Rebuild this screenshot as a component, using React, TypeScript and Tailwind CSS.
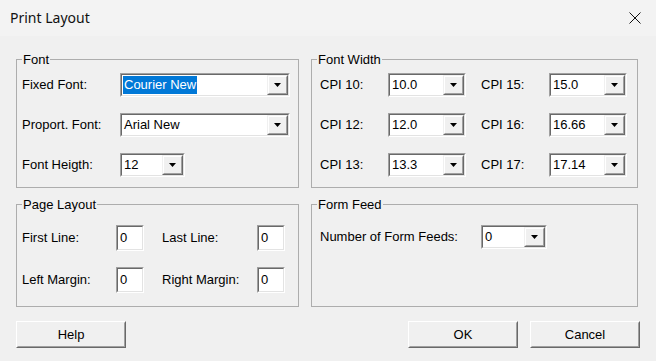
import React from "react";

const FONT = "font-['Liberation_Sans',Arial,sans-serif]";

function Arrow() {
  return (
    <svg width="7" height="4" viewBox="0 0 7 4">
      <path d="M0 0h7L3.5 4z" fill="#000" />
    </svg>
  );
}

function Combo({ value, width, selected = false }: { value: string; width: string; selected?: boolean }) {
  return (
    <div className={`${width} h-[24px] flex border border-t-[#a0a0a0] border-l-[#a0a0a0] border-b-white border-r-white`}>
      <div className="flex-1 flex border border-t-[#696969] border-l-[#696969] border-b-[#e3e3e3] border-r-[#e3e3e3] bg-white">
        <div className="flex-1 flex items-center pl-[1px] overflow-hidden">
          {selected ? (
            <span className="bg-[#0078d7] text-white leading-[18px] px-[1px]">{value}</span>
          ) : (
            <span className="px-[1px]">{value}</span>
          )}
        </div>
        <div className="w-[21px] flex border border-t-[#f0f0f0] border-l-[#f0f0f0] border-b-[#696969] border-r-[#696969]">
          <div className="flex-1 flex items-center justify-center bg-[#f0f0f0] border border-t-white border-l-white border-b-[#a0a0a0] border-r-[#a0a0a0]">
            <Arrow />
          </div>
        </div>
      </div>
    </div>
  );
}

function Field({ value }: { value: string }) {
  return (
    <div className="w-[28px] h-[26px] flex border border-t-[#a0a0a0] border-l-[#a0a0a0] border-b-white border-r-white">
      <div className="flex-1 flex items-center border border-t-[#696969] border-l-[#696969] border-b-[#e3e3e3] border-r-[#e3e3e3] bg-white pl-[2px]">
        {value}
      </div>
    </div>
  );
}

function Group({ title, className, children }: { title: string; className: string; children: React.ReactNode }) {
  return (
    <div className={`relative border border-[#adadad] ${className}`}>
      <span className="absolute -top-[8px] left-[5px] bg-[#f0f0f0] px-[1px] leading-[15px]">{title}</span>
      {children}
    </div>
  );
}

function Button({ label }: { label: string }) {
  return (
    <button className="w-[110px] h-[27px] flex border border-t-white border-l-white border-b-[#696969] border-r-[#696969]">
      <div className="flex-1 flex items-center justify-center bg-[#f0f0f0] border border-t-[#f0f0f0] border-l-[#f0f0f0] border-b-[#a0a0a0] border-r-[#a0a0a0]">
        {label}
      </div>
    </button>
  );
}

const CPI = [
  ["CPI 10:", "10.0", "CPI 15:", "15.0"],
  ["CPI 12:", "12.0", "CPI 16:", "16.66"],
  ["CPI 13:", "13.3", "CPI 17:", "17.14"],
];

const MARGINS = [
  ["First Line:", "Last Line:"],
  ["Left Margin:", "Right Margin:"],
];

export default function App() {
  return (
    <div className={`w-[656px] h-[361px] bg-[#f0f0f0] text-black text-[13px] ${FONT} overflow-hidden whitespace-nowrap`}>
      {/* Title bar */}
      <div className="h-[36px] flex items-center justify-between bg-[#f3f3f3] pl-[10px] pr-[15px]">
        <span className="font-['Noto_Sans',sans-serif] text-[14px] text-[#111] -mt-[1px]">Print Layout</span>
        <svg width="12" height="12" viewBox="0 0 12 12">
          <path d="M0.5 0.5L11.5 11.5M11.5 0.5L0.5 11.5" stroke="#111" strokeWidth="1" />
        </svg>
      </div>

      <div className="pl-[16px] pt-[23px]">
        <div className="grid grid-cols-[283px_327px] grid-rows-[129px_103px] gap-x-[12px] gap-y-[16px]">
          <Group title="Font" className="pt-[13px] pl-[5px]">
            <div className="flex flex-col gap-[16px]">
              <div className="flex items-center">
                <span className="w-[98px]">Fixed Font:</span>
                <Combo value="Courier New" width="w-[170px]" selected />
              </div>
              <div className="flex items-center">
                <span className="w-[98px]">Proport. Font:</span>
                <Combo value="Arial New" width="w-[170px]" />
              </div>
              <div className="flex items-center">
                <span className="w-[98px]">Font Heigth:</span>
                <Combo value="12" width="w-[65px]" />
              </div>
            </div>
          </Group>

          <Group title="Font Width" className="pt-[13px] pl-[8px]">
            <div className="flex flex-col gap-[16px]">
              {CPI.map(([l1, v1, l2, v2]) => (
                <div key={l1} className="flex items-center">
                  <span className="w-[68px]">{l1}</span>
                  <Combo value={v1} width="w-[78px]" />
                  <span className="w-[68px] ml-[15px]">{l2}</span>
                  <Combo value={v2} width="w-[78px]" />
                </div>
              ))}
            </div>
          </Group>

          <Group title="Page Layout" className="pt-[20px] pl-[5px]">
            <div className="flex flex-col gap-[16px]">
              {MARGINS.map(([l1, l2]) => (
                <div key={l1} className="flex items-center">
                  <span className="w-[94px]">{l1}</span>
                  <Field value="0" />
                  <span className="w-[95px] ml-[18px]">{l2}</span>
                  <Field value="0" />
                </div>
              ))}
            </div>
          </Group>

          <Group title="Form Feed" className="pt-[20px] pl-[8px]">
            <div className="flex items-center">
              <span className="w-[161px]">Number of Form Feeds:</span>
              <Combo value="0" width="w-[66px]" />
            </div>
          </Group>
        </div>

        <div className="mt-[14px] w-[624px] flex justify-between">
          <Button label="Help" />
          <div className="flex gap-[12px]">
            <Button label="OK" />
            <Button label="Cancel" />
          </div>
        </div>
      </div>
    </div>
  );
}
